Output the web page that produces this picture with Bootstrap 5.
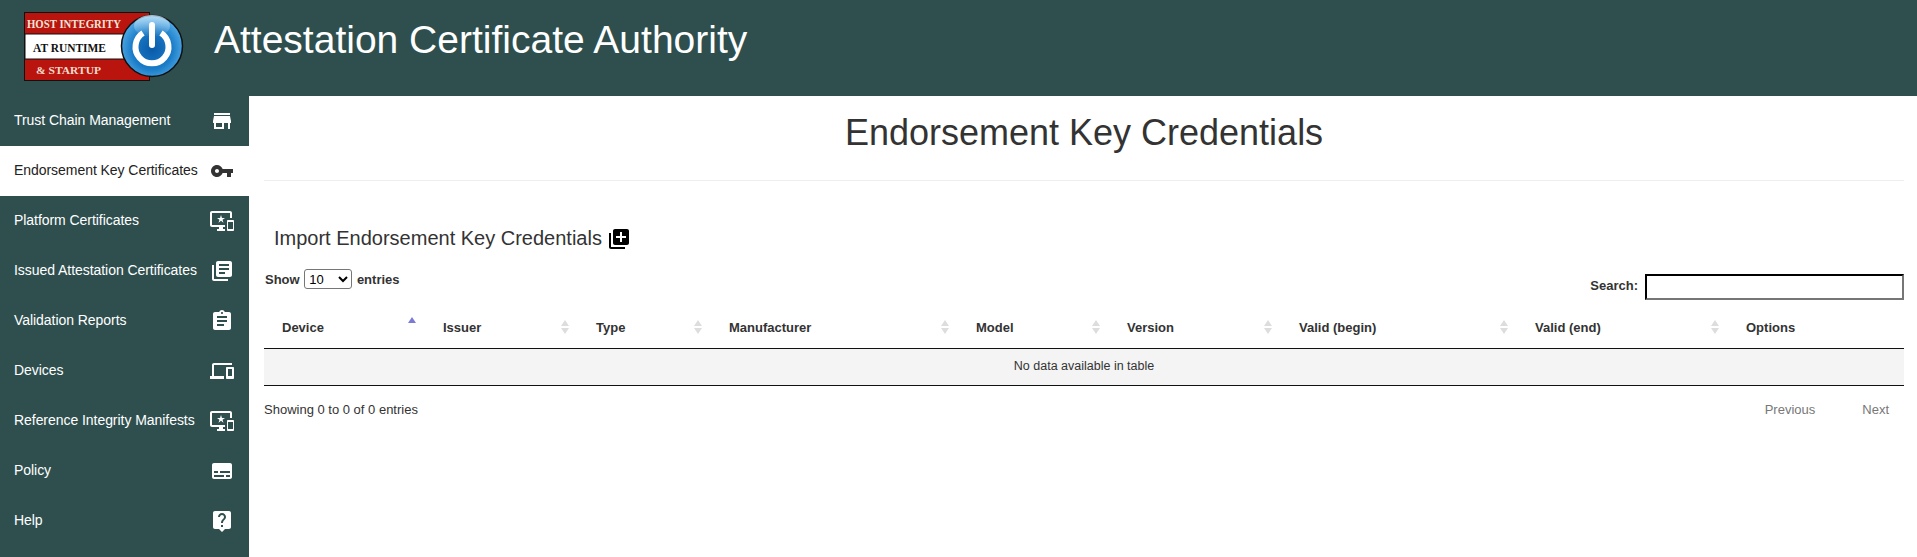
<!DOCTYPE html>
<html lang="en">
<head>
<meta charset="utf-8">
<title>Attestation Certificate Authority</title>
<link href="https://cdn.jsdelivr.net/npm/bootstrap@5.3.0/dist/css/bootstrap.min.css" rel="stylesheet">
<style>
html,body{height:100%;overflow:hidden}
body{font-family:"Liberation Sans",Arial,sans-serif;color:#333;background:#fff}
.page-head{height:96px;background:#2f4f4f;color:#fff}
.logo-svg{width:164px;height:74px;margin-left:22px;margin-right:28px;flex:none}
.app-title{font-size:39px;font-weight:400;margin:0;line-height:1;padding-bottom:17px}
.page-body{height:461px}
.side-nav{width:249px;background:#2f4f4f;flex:none}
.side-link{height:50px;padding:0 0 0 14px;color:#fff;font-size:14px;text-decoration:none;letter-spacing:-.05px}
.side-link:hover{color:#fff}
.side-link.is-active{background:#fff;color:#222}
.side-label{padding-bottom:2px}
.side-icon{width:24px;height:24px;fill:#fff;margin-right:15px;flex:none;margin-left:auto}
.side-link.is-active .side-icon{fill:#333}
.main-pane{padding:0 13px 0 15px;min-width:0}
.pane-title{height:85px;margin:0;font-size:36px;font-weight:400;color:#333;border-bottom:1px solid #eee;padding-bottom:10px}
.import-row{height:58px;margin-top:28px;padding-left:10px;font-size:20px;color:#333}
.import-icon{width:24px;height:24px;fill:#000;margin-left:5px;margin-top:2px}
.dt-top{height:44px;font-size:13px;font-weight:700;margin-top:-3px}
.len-label{padding-left:1px;padding-top:5px}
.len-select{width:48px;height:20px;font-size:13px;font-family:"Liberation Sans",sans-serif;margin:0 1px;background:#fff;border:1px solid #767676;border-radius:3px;padding:0}
.search-label{padding-top:10px}
.search-box{width:259px;height:26px;margin-left:7px;border-width:2px;border-style:inset;border-color:#222 #767676 #767676 #222;padding:1px 2px;background:#fff;vertical-align:middle;border-radius:0}
.dt-table{table-layout:fixed;width:100%;margin:0;font-size:12px;color:#333;--bs-table-bg:transparent}
.dt-table th{position:relative;height:40px;padding:0 18px;font-size:13px;font-weight:700;color:#333;border-bottom:1px solid #111;vertical-align:middle}
.dt-table td{height:37px;padding:0;background:#f4f4f4;text-align:center;color:#333;border-bottom:1px solid #111;vertical-align:middle;box-shadow:none;font-size:12.5px}
.c1{width:161px}.c2{width:153px}.c3{width:133px}.c4{width:247px}.c5{width:151px}.c6{width:172px}.c7{width:236px}.c8{width:211px}
.sort-arrows{position:absolute;right:9px;top:10px;width:8px;height:18px;fill:#ddd}
.sort-asc .sort-arrows{top:6px;fill:#7b7bd6}
.dt-foot{font-size:13px;color:#333;padding-top:14px}
.pager-btn{color:#777;margin-right:15px;margin-left:32px}
</style>
</head>
<body>
<header class="page-head d-flex align-items-center">
  <svg class="logo-svg" viewBox="0 0 164 74" role="img" aria-label="Host Integrity at Runtime and Startup">
    <defs>
      <radialGradient id="orb" cx=".5" cy=".55" r=".6">
        <stop offset="0" stop-color="#0a5aa8"/><stop offset=".55" stop-color="#1a7cc8"/><stop offset="1" stop-color="#62b8ee"/>
      </radialGradient>
      <linearGradient id="shine" x1="0" y1="0" x2="0" y2="1">
        <stop offset="0" stop-color="#cfeafc" stop-opacity=".8"/><stop offset="1" stop-color="#cfeafc" stop-opacity="0"/>
      </linearGradient>
    </defs>
    <rect x="2.500" y="1.500" width="125" height="68" fill="#b9150e" stroke="#111"/>
    <rect x="3" y="23" width="105" height="25" fill="#fff" stroke="#111" stroke-width="1"/>
    <g font-family="Liberation Serif,serif" font-weight="700">
      <text x="5" y="17" font-size="11.500" fill="#f4e4d8" textLength="94" lengthAdjust="spacingAndGlyphs">HOST INTEGRITY</text>
      <text x="11" y="41" font-size="11.500" fill="#111" textLength="73" lengthAdjust="spacingAndGlyphs">AT RUNTIME</text>
      <text x="14" y="63" font-size="11" fill="#f0dccc" textLength="65" lengthAdjust="spacingAndGlyphs">&amp; STARTUP</text>
    </g>
    <circle cx="130" cy="35" r="30.500" fill="url(#orb)" stroke="#111" stroke-width="1.500"/>
    <ellipse cx="130" cy="15" rx="18" ry="11" fill="url(#shine)"/>
    <path d="M121 22a16.500 16.500 0 1 0 18 0" fill="none" stroke="#fff" stroke-width="6"/>
    <path d="M130 14v20" stroke="#fff" stroke-width="6" stroke-linecap="round"/>
  </svg>
  <h1 class="app-title">Attestation Certificate Authority</h1>
</header>
<div class="page-body d-flex">
  <nav class="side-nav d-flex flex-column">
    <a class="side-link d-flex align-items-center" href="#"><span class="side-label">Trust Chain Management</span><svg class="side-icon" viewBox="0 0 24 24"><path d="M20 4H4v2h16V4zm1 10v-2l-1-5H4l-1 5v2h1v6h10v-6h4v6h2v-6h1zm-9 4H6v-4h6v4z"/></svg></a>
    <a class="side-link is-active d-flex align-items-center" href="#"><span class="side-label">Endorsement Key Certificates</span><svg class="side-icon" viewBox="0 0 24 24"><path d="M12.65 10C11.83 7.67 9.61 6 7 6c-3.31 0-6 2.69-6 6s2.69 6 6 6c2.61 0 4.83-1.67 5.65-4H17v4h4v-4h2v-4H12.65zM7 14c-1.1 0-2-.9-2-2s.9-2 2-2 2 .9 2 2-.9 2-2 2z"/></svg></a>
    <a class="side-link d-flex align-items-center" href="#"><span class="side-label">Platform Certificates</span><svg class="side-icon" viewBox="0 0 24 24"><path d="M23 11.010L18 11c-.55 0-1 .45-1 1v9c0 .55.45 1 1 1h5c.55 0 1-.45 1-1v-9c0-.55-.45-.99-1-.99zM23 20h-5v-7h5v7zM20 2H2C.89 2 0 2.890 0 4v12c0 1.100.89 2 2 2h7v2H7v2h8v-2h-2v-2h2v-2H2V4h18v5h2V4c0-1.110-.9-2-2-2zm-8.030 7L11 6l-.97 3H7l2.470 1.760-.94 2.910 2.470-1.800 2.470 1.800-.94-2.910L15 9h-3.030z"/></svg></a>
    <a class="side-link d-flex align-items-center" href="#"><span class="side-label">Issued Attestation Certificates</span><svg class="side-icon" viewBox="0 0 24 24"><path d="M4 6H2v14c0 1.100.9 2 2 2h14v-2H4V6zm16-4H8c-1.100 0-2 .9-2 2v12c0 1.100.9 2 2 2h12c1.100 0 2-.9 2-2V4c0-1.100-.9-2-2-2zm-1 9H9V9h10v2zm-4 4H9v-2h6v2zm4-8H9V5h10v2z"/></svg></a>
    <a class="side-link d-flex align-items-center" href="#"><span class="side-label">Validation Reports</span><svg class="side-icon" viewBox="0 0 24 24"><path d="M19 3h-4.180C14.400 1.840 13.300 1 12 1c-1.300 0-2.400.84-2.820 2H5c-1.100 0-2 .9-2 2v14c0 1.100.9 2 2 2h14c1.100 0 2-.9 2-2V5c0-1.100-.9-2-2-2zm-7 0c.55 0 1 .45 1 1s-.45 1-1 1-1-.45-1-1 .45-1 1-1zm2 14H7v-2h7v2zm3-4H7v-2h10v2zm0-4H7V7h10v2z"/></svg></a>
    <a class="side-link d-flex align-items-center" href="#"><span class="side-label">Devices</span><svg class="side-icon" viewBox="0 0 24 24"><path d="M4 6h18V4H4c-1.100 0-2 .9-2 2v11H0v3h14v-3H4V6zm19 2h-6c-.55 0-1 .45-1 1v10c0 .55.45 1 1 1h6c.55 0 1-.45 1-1V9c0-.55-.45-1-1-1zm-1 9h-4v-7h4v7z"/></svg></a>
    <a class="side-link d-flex align-items-center" href="#"><span class="side-label">Reference Integrity Manifests</span><svg class="side-icon" viewBox="0 0 24 24"><path d="M23 11.010L18 11c-.55 0-1 .45-1 1v9c0 .55.45 1 1 1h5c.55 0 1-.45 1-1v-9c0-.55-.45-.99-1-.99zM23 20h-5v-7h5v7zM20 2H2C.89 2 0 2.890 0 4v12c0 1.100.89 2 2 2h7v2H7v2h8v-2h-2v-2h2v-2H2V4h18v5h2V4c0-1.110-.9-2-2-2zm-8.030 7L11 6l-.97 3H7l2.470 1.760-.94 2.910 2.470-1.800 2.470 1.800-.94-2.910L15 9h-3.030z"/></svg></a>
    <a class="side-link d-flex align-items-center" href="#"><span class="side-label">Policy</span><svg class="side-icon" viewBox="0 0 24 24"><path d="M20 4H4c-1.100 0-2 .9-2 2v12c0 1.100.9 2 2 2h16c1.100 0 2-.9 2-2V6c0-1.100-.9-2-2-2zM4 12h4v2H4v-2zm10 6H4v-2h10v2zm6 0h-4v-2h4v2zm0-4H10v-2h10v2z"/></svg></a>
    <a class="side-link d-flex align-items-center" href="#"><span class="side-label">Help</span><svg class="side-icon" viewBox="0 0 24 24"><path d="M19 2H5c-1.110 0-2 .9-2 2v14c0 1.100.89 2 2 2h4l3 3 3-3h4c1.100 0 2-.9 2-2V4c0-1.100-.9-2-2-2zm-6 16h-2v-2h2v2zm2.070-7.750l-.9.92C13.450 11.900 13 12.500 13 14h-2v-.5c0-1.100.45-2.100 1.170-2.830l1.240-1.260c.37-.36.59-.86.59-1.410 0-1.100-.9-2-2-2s-2 .9-2 2H8c0-2.210 1.790-4 4-4s4 1.790 4 4c0 .88-.36 1.680-.93 2.250z"/></svg></a>
  </nav>
  <main class="main-pane flex-grow-1">
    <h2 class="pane-title d-flex align-items-center justify-content-center">Endorsement Key Credentials</h2>
    <div class="import-row d-flex align-items-center">Import Endorsement Key Credentials<svg class="import-icon" viewBox="0 0 24 24"><path d="M4 6H2v14c0 1.100.9 2 2 2h14v-2H4V6zm16-4H8c-1.100 0-2 .9-2 2v12c0 1.100.9 2 2 2h12c1.100 0 2-.9 2-2V4c0-1.100-.9-2-2-2zm-1 9h-4v4h-2v-4H9V9h4V5h2v4h4v2z"/></svg></div>
    <div class="dt-top d-flex justify-content-between align-items-start">
      <label class="len-label">Show <select class="len-select"><option>10</option><option>25</option><option>50</option><option>100</option></select> entries</label>
      <label class="search-label">Search:<input class="search-box" type="search" aria-label="Search"></label>
    </div>
    <table class="table dt-table">
      <colgroup><col class="c1"><col class="c2"><col class="c3"><col class="c4"><col class="c5"><col class="c6"><col class="c7"><col class="c8"><col></colgroup>
      <thead><tr>
        <th class="sort-asc">Device<svg class="sort-arrows" viewBox="0 0 8 18"><path d="M4 3l4 6H0z"/></svg></th>
        <th>Issuer<svg class="sort-arrows" viewBox="0 0 8 18"><path d="M4 2l4 6H0zM4 16l4-6H0z"/></svg></th>
        <th>Type<svg class="sort-arrows" viewBox="0 0 8 18"><path d="M4 2l4 6H0zM4 16l4-6H0z"/></svg></th>
        <th>Manufacturer<svg class="sort-arrows" viewBox="0 0 8 18"><path d="M4 2l4 6H0zM4 16l4-6H0z"/></svg></th>
        <th>Model<svg class="sort-arrows" viewBox="0 0 8 18"><path d="M4 2l4 6H0zM4 16l4-6H0z"/></svg></th>
        <th>Version<svg class="sort-arrows" viewBox="0 0 8 18"><path d="M4 2l4 6H0zM4 16l4-6H0z"/></svg></th>
        <th>Valid (begin)<svg class="sort-arrows" viewBox="0 0 8 18"><path d="M4 2l4 6H0zM4 16l4-6H0z"/></svg></th>
        <th>Valid (end)<svg class="sort-arrows" viewBox="0 0 8 18"><path d="M4 2l4 6H0zM4 16l4-6H0z"/></svg></th>
        <th>Options</th>
      </tr></thead>
      <tbody><tr><td colspan="9">No data available in table</td></tr></tbody>
    </table>
    <div class="dt-foot d-flex justify-content-between">
      <span>Showing 0 to 0 of 0 entries</span>
      <span><span class="pager-btn">Previous</span><span class="pager-btn">Next</span></span>
    </div>
  </main>
</div>
<script src="https://cdn.jsdelivr.net/npm/bootstrap@5.3.0/dist/js/bootstrap.bundle.min.js"></script>
</body>
</html>
